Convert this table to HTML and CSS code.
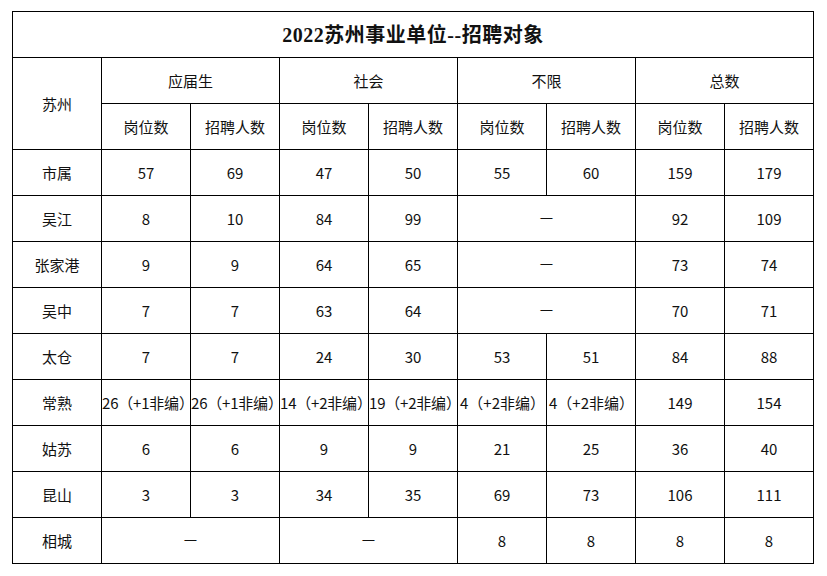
FILE: index.html
```html
<!DOCTYPE html>
<html lang="zh">
<head>
<meta charset="utf-8">
<link rel="stylesheet" href="styles.css">
</head>
<body>
<table class="grid">
  <colgroup>
    <col class="c"><col class="c"><col class="c"><col class="c"><col class="c"><col class="c"><col class="c"><col class="c"><col class="c">
  </colgroup>
  <tr><td class="title" colspan="9">2022苏州事业单位--招聘对象</td></tr>
  <tr>
    <td rowspan="2">苏州</td>
    <td colspan="2">应届生</td>
    <td colspan="2">社会</td>
    <td colspan="2">不限</td>
    <td colspan="2">总数</td>
  </tr>
  <tr>
    <td>岗位数</td><td>招聘人数</td><td>岗位数</td><td>招聘人数</td><td>岗位数</td><td>招聘人数</td><td>岗位数</td><td>招聘人数</td>
  </tr>
  <tr><td>市属</td><td>57</td><td>69</td><td>47</td><td>50</td><td>55</td><td>60</td><td>159</td><td>179</td></tr>
  <tr><td>吴江</td><td>8</td><td>10</td><td>84</td><td>99</td><td colspan="2" class="dash">—</td><td>92</td><td>109</td></tr>
  <tr><td>张家港</td><td>9</td><td>9</td><td>64</td><td>65</td><td colspan="2" class="dash">—</td><td>73</td><td>74</td></tr>
  <tr><td>吴中</td><td>7</td><td>7</td><td>63</td><td>64</td><td colspan="2" class="dash">—</td><td>70</td><td>71</td></tr>
  <tr><td>太仓</td><td>7</td><td>7</td><td>24</td><td>30</td><td>53</td><td>51</td><td>84</td><td>88</td></tr>
  <tr><td>常熟</td><td class="wide">26（+1非编）</td><td class="wide">26（+1非编）</td><td class="wide">14（+2非编）</td><td class="wide">19（+2非编）</td><td class="left">4（+2非编）</td><td class="left">4（+2非编）</td><td>149</td><td>154</td></tr>
  <tr><td>姑苏</td><td>6</td><td>6</td><td>9</td><td>9</td><td>21</td><td>25</td><td>36</td><td>40</td></tr>
  <tr><td>昆山</td><td>3</td><td>3</td><td>34</td><td>35</td><td>69</td><td>73</td><td>106</td><td>111</td></tr>
  <tr><td>相城</td><td colspan="2" class="dash">—</td><td colspan="2" class="dash">—</td><td>8</td><td>8</td><td>8</td><td>8</td></tr>
</table>
</body>
</html>
```
FILE: styles.css
```css
html, body {
  margin: 0;
  padding: 0;
  background: #ffffff;
}
body {
  padding: 11px 0 0 12px;
  font-family: "Noto Sans CJK SC", "Noto Sans", sans-serif;
  color: #111111;
}
.grid {
  border-collapse: collapse;
  table-layout: fixed;
  width: 802px;
}
.c {
  width: 89px;
}
.grid tr {
  height: 46px;
}
.grid td {
  border: 1px solid #000000;
  height: 45px;
  padding: 0;
  text-align: center;
  vertical-align: middle;
  font-size: 15px;
  line-height: 18px;
  white-space: nowrap;
  overflow: visible;
}
.grid td.title {
  font-family: "Liberation Serif", "Noto Sans CJK SC", serif;
  font-weight: bold;
  font-size: 20px;
  letter-spacing: 0.5px;
}
.grid td.wide {
  letter-spacing: -0.2px;
}
.grid td.left {
  text-align: left;
  padding-left: 2px;
}
.grid td.dash {
  height: 41px;
  padding-bottom: 4px;
}
```
